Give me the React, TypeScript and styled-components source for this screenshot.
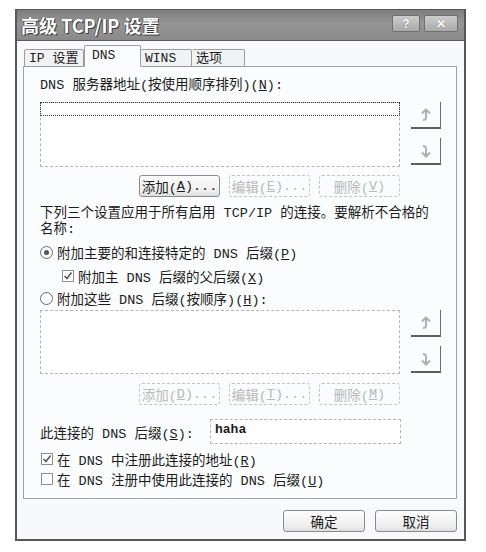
import React from "react";
import styled, { createGlobalStyle } from "styled-components";

const GlobalStyle = createGlobalStyle`
  html, body { margin: 0; padding: 0; background: #fff; }
  body {
    font-family: "Liberation Mono", "Noto Sans CJK SC", monospace;
    font-size: 13.5px;
    color: #1c1c1c;
  }
`;

const Page = styled.div`
  width: 486px;
  height: 552px;
  overflow: hidden;
  box-sizing: border-box;
  padding: 9px 0 0 15px;
  background: #fff;
`;

const Window = styled.div`
  width: 451px;
  height: 532px;
  box-sizing: border-box;
  border: 2px solid #575757;
  border-top-width: 1px;
  background: #f7f9fb;
  display: flex;
  flex-direction: column;
`;

const TitleBar = styled.div`
  height: 30px;
  flex: none;
  display: flex;
  align-items: center;
  justify-content: space-between;
  padding: 0 6px 0 4px;
  background: linear-gradient(#7d7d7d, #959595 45%, #8a8a8a);
  border-bottom: 1px solid #5d5d5d;
`;

const Title = styled.span`
  font-family: "Noto Sans CJK SC", "Liberation Sans", sans-serif;
  font-size: 18px;
  font-weight: 700;
  color: #fff;
  text-shadow: 1px 1px 0 #3c3c3c, -1px 0 0 #5a5a5a;
`;

const TitleButtons = styled.div`
  display: flex;
  gap: 4px;
  margin-top: -3px;
`;

const TitleButton = styled.span<{ $w: number }>`
  width: ${(p) => p.$w}px;
  height: 17px;
  box-sizing: border-box;
  border: 1px solid #707070;
  border-radius: 2px;
  background: linear-gradient(#cdcdcd, #a9a9a9);
  display: flex;
  align-items: center;
  justify-content: center;
  font-family: "Liberation Sans", sans-serif;
  font-weight: 700;
  font-size: 12px;
  color: #fff;
  text-shadow: 0 0 1px #666;
`;

const Body = styled.div`
  flex: 1;
  display: flex;
  flex-direction: column;
  padding: 5px 7px 0 6px;
`;

const Tabs = styled.div`
  display: flex;
  align-items: flex-end;
  height: 21px;
  padding-left: 1px;
  margin-bottom: -1px;
  position: relative;
  z-index: 1;
`;

const Tab = styled.div<{ $w: number; $active?: boolean }>`
  width: ${(p) => p.$w}px;
  height: ${(p) => (p.$active ? 22 : 18)}px;
  box-sizing: border-box;
  border: 1px solid #9c9c9c;
  border-bottom-color: ${(p) => (p.$active ? "#fbfcfd" : "#9c9c9c")};
  border-left-width: ${(p) => (p.$active ? 1 : 0)}px;
  border-radius: 2px 2px 0 0;
  background: ${(p) => (p.$active ? "#fbfcfd" : "#f1f2f3")};
  padding: ${(p) => (p.$active ? "2px 0 0 7px" : "1px 0 0 4px")};
  font-size: 13px;
  line-height: 16px;
  white-space: nowrap;
  &:first-child {
    border-left-width: 1px;
  }
`;

const Panel = styled.div`
  height: 433px;
  box-sizing: border-box;
  border: 1px solid #a2a2a2;
  background: #fbfcfd;
  padding: 0 15px 0 16px;
  display: flex;
  flex-direction: column;
`;

const Caption = styled.div<{ $top: number }>`
  margin-top: ${(p) => p.$top}px;
  line-height: 16px;
  height: 16px;
  white-space: nowrap;
`;

const Para = styled.div`
  margin-top: 9px;
  line-height: 16px;
  white-space: nowrap;
`;

const Key = styled.u`
  text-underline-offset: 1px;
`;

const ListRow = styled.div<{ $top: number }>`
  margin-top: ${(p) => p.$top}px;
  display: flex;
  gap: 11px;
  align-items: flex-start;
`;

const ListBox = styled.div<{ $h: number }>`
  width: 360px;
  height: ${(p) => p.$h}px;
  box-sizing: border-box;
  border: 1px dashed #b4b4b4;
  background: #fff;
`;

const FocusRow = styled.div`
  height: 14px;
  margin: -1px;
  border: 1px dotted #3a3a3a;
  box-sizing: border-box;
`;

const ArrowCol = styled.div`
  display: flex;
  flex-direction: column;
  gap: 9px;
`;

const ArrowButton = styled.div`
  width: 30px;
  height: 27px;
  box-sizing: border-box;
  border-right: 1px solid #6e6e6e;
  border-bottom: 2px solid #5e5e5e;
  display: flex;
  align-items: center;
  justify-content: center;
  color: #b0b0b0;
`;

const ButtonRow = styled.div<{ $top: number }>`
  margin-top: ${(p) => p.$top}px;
  display: flex;
  justify-content: flex-end;
  gap: 9px;
  padding-right: 41px;
`;

const Button = styled.div<{ $disabled?: boolean; $w?: number }>`
  width: ${(p) => p.$w ?? 81}px;
  height: 22px;
  box-sizing: border-box;
  border: 1px ${(p) => (p.$disabled ? "dashed #c4c4c4" : "solid #8c8c8c")};
  border-radius: 3px;
  background: ${(p) =>
    p.$disabled ? "#fbfcfd" : "linear-gradient(#fdfdfd, #ededed 80%, #dcdcdc)"};
  color: ${(p) => (p.$disabled ? "#b9b9b9" : "#1c1c1c")};
  display: flex;
  align-items: center;
  justify-content: center;
  white-space: nowrap;
`;

const OptionRow = styled.div<{ $top: number; $indent?: number }>`
  margin-top: ${(p) => p.$top}px;
  margin-left: ${(p) => p.$indent ?? 0}px;
  height: 18px;
  display: flex;
  align-items: center;
  gap: 4px;
  white-space: nowrap;
`;

const Radio = styled.span<{ $on?: boolean }>`
  width: 13px;
  height: 13px;
  box-sizing: border-box;
  border-radius: 50%;
  border: 1px solid #6a6a6a;
  background: #fff;
  flex: none;
  display: flex;
  align-items: center;
  justify-content: center;
  &::after {
    content: "";
    width: 5px;
    height: 5px;
    border-radius: 50%;
    background: ${(p) => (p.$on ? "#555" : "transparent")};
  }
`;

const Check = styled.span`
  width: 12px;
  height: 12px;
  box-sizing: border-box;
  border: 1px solid #8e8e8e;
  background: #fff;
  flex: none;
  display: flex;
  align-items: center;
  justify-content: center;
`;

const SuffixRow = styled.div`
  margin-top: 14px;
  display: flex;
  align-items: center;
  justify-content: space-between;
  padding-right: 40px;
`;

const Input = styled.div`
  width: 191px;
  height: 25px;
  box-sizing: border-box;
  border: 1px dashed #b4b4b4;
  background: #fff;
  padding: 2px 0 0 4px;
  font-family: "Liberation Mono", monospace;
  font-weight: 700;
  font-size: 13px;
`;

const Footer = styled.div`
  margin-top: 11px;
  display: flex;
  justify-content: flex-end;
  gap: 10px;
`;

const UpIcon = () => (
  <svg width="14" height="14" viewBox="0 0 14 14" fill="none" stroke="currentColor" strokeWidth="2">
    <path d="M3 5.5 L7 1.5 L11 5.5 M7 2 V9.5 Q7 12 4 12" />
  </svg>
);

const DownIcon = () => (
  <svg width="14" height="14" viewBox="0 0 14 14" fill="none" stroke="currentColor" strokeWidth="2">
    <path d="M3 8.5 L7 12.5 L11 8.5 M7 12 V4.5 Q7 2 4 2" />
  </svg>
);

const CheckMark = () => (
  <svg width="10" height="10" viewBox="0 0 10 10" fill="none" stroke="#5a5a5a" strokeWidth="1.6">
    <path d="M1.5 5 L4 7.5 L8.5 1.5" />
  </svg>
);

export default function App() {
  return (
    <Page>
      <GlobalStyle />
      <Window>
        <TitleBar>
          <Title>高级 TCP/IP 设置</Title>
          <TitleButtons>
            <TitleButton $w={28}>?</TitleButton>
            <TitleButton $w={34}>✕</TitleButton>
          </TitleButtons>
        </TitleBar>
        <Body>
          <Tabs>
            <Tab $w={60}>IP 设置</Tab>
            <Tab $w={57} $active>DNS</Tab>
            <Tab $w={51}>WINS</Tab>
            <Tab $w={53}>选项</Tab>
          </Tabs>
          <Panel>
            <Caption $top={11}>
              DNS 服务器地址(按使用顺序排列)(<Key>N</Key>):
            </Caption>
            <ListRow $top={8}>
              <ListBox $h={65}>
                <FocusRow />
              </ListBox>
              <ArrowCol>
                <ArrowButton><UpIcon /></ArrowButton>
                <ArrowButton><DownIcon /></ArrowButton>
              </ArrowCol>
            </ListRow>
            <ButtonRow $top={8}>
              <Button>添加(<Key>A</Key>)...</Button>
              <Button $disabled>编辑(<Key>E</Key>)...</Button>
              <Button $disabled>删除(<Key>V</Key>)</Button>
            </ButtonRow>
            <Para>
              下列三个设置应用于所有启用 TCP/IP 的连接。要解析不合格的
              <br />
              名称:
            </Para>
            <OptionRow $top={5}>
              <Radio $on />
              <span>附加主要的和连接特定的 DNS 后缀(<Key>P</Key>)</span>
            </OptionRow>
            <OptionRow $top={6} $indent={22}>
              <Check><CheckMark /></Check>
              <span>附加主 DNS 后缀的父后缀(<Key>X</Key>)</span>
            </OptionRow>
            <OptionRow $top={4}>
              <Radio />
              <span>附加这些 DNS 后缀(按顺序)(<Key>H</Key>):</span>
            </OptionRow>
            <ListRow $top={3}>
              <ListBox $h={64} />
              <ArrowCol>
                <ArrowButton><UpIcon /></ArrowButton>
                <ArrowButton><DownIcon /></ArrowButton>
              </ArrowCol>
            </ListRow>
            <ButtonRow $top={9}>
              <Button $disabled>添加(<Key>D</Key>)...</Button>
              <Button $disabled>编辑(<Key>T</Key>)...</Button>
              <Button $disabled>删除(<Key>M</Key>)</Button>
            </ButtonRow>
            <SuffixRow>
              <span>此连接的 DNS 后缀(<Key>S</Key>):</span>
              <Input>haha</Input>
            </SuffixRow>
            <OptionRow $top={6} $indent={1}>
              <Check><CheckMark /></Check>
              <span>在 DNS 中注册此连接的地址(<Key>R</Key>)</span>
            </OptionRow>
            <OptionRow $top={2} $indent={1}>
              <Check />
              <span>在 DNS 注册中使用此连接的 DNS 后缀(<Key>U</Key>)</span>
            </OptionRow>
          </Panel>
          <Footer>
            <Button $w={82}>确定</Button>
            <Button $w={82}>取消</Button>
          </Footer>
        </Body>
      </Window>
    </Page>
  );
}
